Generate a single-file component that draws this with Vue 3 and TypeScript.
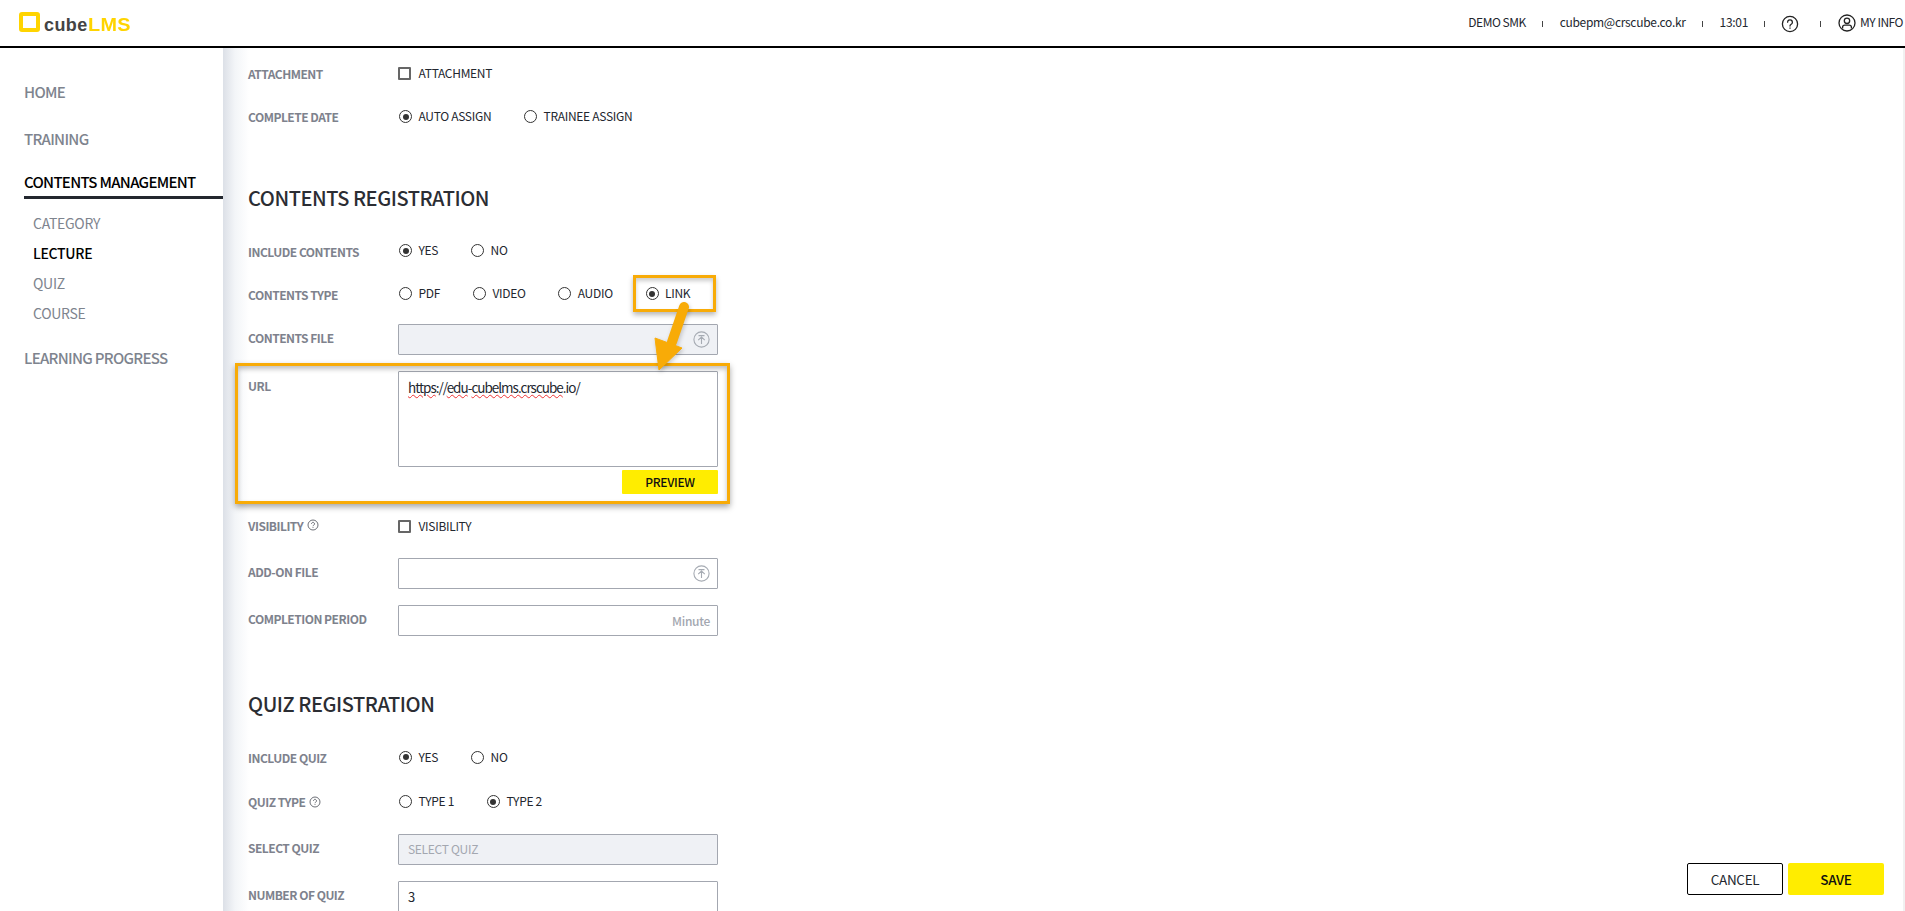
<script setup lang="ts">
const subItems: { label: string; active: boolean }[] = [
  { label: 'CATEGORY', active: false },
  { label: 'LECTURE', active: true },
  { label: 'QUIZ', active: false },
  { label: 'COURSE', active: false },
]
const includeOptions = [{ label: 'YES', on: true }, { label: 'NO', on: false }]
const typeOptions = [
  { label: 'PDF', on: false },
  { label: 'VIDEO', on: false },
  { label: 'AUDIO', on: false },
  { label: 'LINK', on: true },
]
const quizTypes = [{ label: 'TYPE 1', on: false }, { label: 'TYPE 2', on: true }]
const dateOptions = [{ label: 'AUTO ASSIGN', on: true }, { label: 'TRAINEE ASSIGN', on: false }]
</script>

<template>
  <div class="page">
    <header class="topbar">
      <div class="logo">
        <span class="logo-box"></span>
        <span class="logo-cube">cube</span><span class="logo-lms">LMS</span>
      </div>
      <div class="top-right">
        <span class="tight">DEMO SMK</span>
        <i class="sep"></i>
        <span>cubepm@crscube.co.kr</span>
        <i class="sep"></i>
        <span>13:01</span>
        <i class="sep"></i>
        <svg class="help" width="18" height="18" viewBox="0 0 18 18" fill="none" stroke="#222" stroke-width="1.3">
          <circle cx="9" cy="9" r="7.6" />
          <path d="M6.6 7.2a2.4 2.4 0 1 1 3.6 2.1c-.8.5-1.2.9-1.2 1.8" stroke-linecap="round" />
          <path d="M9 12.6v1.2" />
        </svg>
        <i class="sep s4"></i>
        <span class="myinfo tight">
          <svg width="18" height="18" viewBox="0 0 18 18" fill="none" stroke="#222" stroke-width="1.3">
            <circle cx="9" cy="9" r="8" />
            <circle cx="9" cy="6.8" r="2.7" />
            <path d="M4.6 14.6v-1.4c0-1.3 1-2 2.2-2h4.4c1.2 0 2.2.7 2.2 2v1.4" />
          </svg>
          MY INFO
        </span>
      </div>
    </header>

    <div class="body">
      <aside class="sidebar">
        <div class="nav-top">HOME</div>
        <div class="nav-top">TRAINING</div>
        <div class="nav-top active">CONTENTS MANAGEMENT</div>
        <ul class="sub">
          <li v-for="s in subItems" :key="s.label" :class="{ on: s.active }">{{ s.label }}</li>
        </ul>
        <div class="nav-top last">LEARNING PROGRESS</div>
      </aside>

      <main class="content">
        <div class="row radio-row">
          <label class="lbl">ATTACHMENT</label>
          <div class="opts"><span class="check"><i class="box"></i>ATTACHMENT</span></div>
        </div>
        <div class="row radio-row">
          <label class="lbl">COMPLETE DATE</label>
          <div class="opts">
            <span v-for="o in dateOptions" :key="o.label" class="radio"><i class="dot" :class="{ on: o.on }"></i>{{ o.label }}</span>
          </div>
        </div>

        <h2>CONTENTS REGISTRATION</h2>

        <div class="row radio-row raised">
          <label class="lbl">INCLUDE CONTENTS</label>
          <div class="opts">
            <span v-for="o in includeOptions" :key="o.label" class="radio"><i class="dot" :class="{ on: o.on }"></i>{{ o.label }}</span>
          </div>
        </div>
        <div class="row radio-row raised">
          <label class="lbl">CONTENTS TYPE</label>
          <div class="opts">
            <span v-for="o in typeOptions" :key="o.label" class="radio"><i class="dot" :class="{ on: o.on }"></i>{{ o.label }}<b v-if="o.on" class="mark-link"></b></span>
          </div>
        </div>
        <div class="row field-row">
          <label class="lbl">CONTENTS FILE</label>
          <div class="field disabled">
            <svg class="up" width="17" height="17" viewBox="0 0 17 17" fill="none" stroke="#a6abb3" stroke-width="1.1">
              <circle cx="8.5" cy="8.5" r="7.6" /><path d="M5.5 4.6h6M8.5 13V6M5.2 9.2 8.5 6l3.3 3.2" />
            </svg>
          </div>
        </div>
        <div class="row url-row">
          <b class="mark-url"></b>
          <label class="lbl url-lbl">URL</label>
          <div class="url-col">
            <div class="area"><span class="err">https</span>://<span class="err">edu</span>-<span class="err">cubelms.crscube</span>.io/</div>
            <button class="preview"><span>PREVIEW</span></button>
          </div>
        </div>
        <div class="row vis-row field-row raised">
          <label class="lbl">VISIBILITY
            <svg class="tip" width="12" height="12" viewBox="0 0 12 12" fill="none" stroke="#5c6068" stroke-width=".9">
              <circle cx="6" cy="6" r="5" /><path d="M4.5 4.8a1.5 1.5 0 1 1 2.3 1.3c-.5.3-.8.6-.8 1.1M6 8.2v.8" />
            </svg>
          </label>
          <div class="opts"><span class="check"><i class="box"></i>VISIBILITY</span></div>
        </div>
        <div class="row field-row">
          <label class="lbl">ADD-ON FILE</label>
          <div class="field">
            <svg class="up" width="17" height="17" viewBox="0 0 17 17" fill="none" stroke="#a6abb3" stroke-width="1.1">
              <circle cx="8.5" cy="8.5" r="7.6" /><path d="M5.5 4.6h6M8.5 13V6M5.2 9.2 8.5 6l3.3 3.2" />
            </svg>
          </div>
        </div>
        <div class="row field-row">
          <label class="lbl">COMPLETION PERIOD</label>
          <div class="field"><span class="unit">Minute</span></div>
        </div>

        <h2>QUIZ REGISTRATION</h2>

        <div class="row radio-row include-quiz">
          <label class="lbl">INCLUDE QUIZ</label>
          <div class="opts">
            <span v-for="o in includeOptions" :key="o.label" class="radio"><i class="dot" :class="{ on: o.on }"></i>{{ o.label }}</span>
          </div>
        </div>
        <div class="row radio-row quiz-type">
          <label class="lbl">QUIZ TYPE
            <svg class="tip" width="12" height="12" viewBox="0 0 12 12" fill="none" stroke="#5c6068" stroke-width=".9">
              <circle cx="6" cy="6" r="5" /><path d="M4.5 4.8a1.5 1.5 0 1 1 2.3 1.3c-.5.3-.8.6-.8 1.1M6 8.2v.8" />
            </svg>
          </label>
          <div class="opts">
            <span v-for="o in quizTypes" :key="o.label" class="radio"><i class="dot" :class="{ on: o.on }"></i>{{ o.label }}</span>
          </div>
        </div>
        <div class="row field-row">
          <label class="lbl">SELECT QUIZ</label>
          <div class="field disabled"><span class="ph">SELECT QUIZ</span></div>
        </div>
        <div class="row field-row">
          <label class="lbl">NUMBER OF QUIZ</label>
          <div class="field"><span class="val">3</span></div>
        </div>

        <svg class="arrow" width="50" height="80" viewBox="0 0 50 80">
          <path d="M39 7 27 42" stroke="#f8ab07" stroke-width="10" stroke-linecap="round" fill="none" />
          <path d="M10 38 14 70 37 48Z" fill="#f8ab07" stroke="#f8ab07" stroke-width="1" stroke-linejoin="round" />
        </svg>
      </main>

      <div class="actions">
        <button class="cancel">CANCEL</button>
        <button class="save">SAVE</button>
      </div>
    </div>
  </div>
</template>

<style>
html, body { margin: 0; overflow: hidden; background: #fff; }
</style>

<style scoped>
.page {
  width: 1905px;
  height: 911px;
  display: flex;
  flex-direction: column;
  overflow: hidden;
  font-family: "Noto Sans CJK KR", "Noto Sans", sans-serif;
  color: #23272f;
  letter-spacing: -0.3px;
}
.topbar {
  height: 46px;
  flex: none;
  border-bottom: 2px solid #000;
  display: flex;
  align-items: center;
  justify-content: space-between;
  padding: 0 2px 0 19px;
}
.logo { display: flex; align-items: baseline; font-family: "Liberation Sans", Arial, sans-serif; font-weight: 700; font-size: 18px; line-height: 20px; margin-top: 3px; letter-spacing: 0; }
.logo-box { width: 21px; height: 20px; box-sizing: border-box; border: 4.5px solid #ffd400; border-radius: 3px; margin-right: 4px; align-self: center; margin-top: -6px; }
.logo-cube { color: #444; letter-spacing: .4px; }
.logo-lms { color: #ffd400; display: inline-block; transform: scaleX(1.1); transform-origin: left; letter-spacing: .3px; }
.top-right { display: flex; align-items: center; font-size: 12px; height: 46px; color: #23272f; }
.top-right > span { position: relative; top: -2px; }
.tight { letter-spacing: -0.5px; }
.sep { width: 1px; height: 6px; background: #444; display: block; margin: 2px 17px 0 16px; }
.help { margin: 2px 0 0 -1px; }
.s4 { margin-left: 21px; }
.myinfo { display: flex; align-items: center; gap: 4px; }
.myinfo svg { position: relative; top: 2px; }

.body { flex: 1; display: flex; position: relative; min-height: 0; }
.sidebar { width: 223px; flex: none; padding-top: 32px; box-sizing: border-box; }
.nav-top { font-size: 15px; font-weight: 500; color: #7e848e; height: 24px; line-height: 24px; margin: 0 0 23px 24px; letter-spacing: -0.7px; }
.nav-top.active { color: #000; border-bottom: 3px solid #23272f; height: 22px; line-height: 16px; margin-bottom: 0; }
.sub { list-style: none; margin: 10px 0 0 33px; padding: 0; }
.sub li { font-size: 14px; color: #7e848e; height: 29.9px; line-height: 29.9px; }
.sub li.on { color: #000; font-weight: 500; }
.nav-top.last { margin-top: 17px; }

.content {
  flex: 1;
  position: relative;
  padding: 12px 0 0 25px;
  background: linear-gradient(90deg, #dce0e7 0, #f3f5f8 12px, #fff 26px);
  border-right: 2px solid #f1f1f1;
  overflow: hidden;
  min-width: 0;
}
.row { display: flex; align-items: center; margin-bottom: 16px; position: relative; }
.radio-row { height: 27px; }
.lbl { width: 150px; flex: none; font-size: 12px; font-weight: 700; color: #7e828d; display: flex; align-items: center; gap: 4px; letter-spacing: -0.5px; }
.field-row .lbl { margin-top: -4px; }
.opts { display: flex; gap: 31.8px; margin-top: -2px; }
.raised .opts { margin-top: -4px; }
.include-quiz .opts { margin-top: -3px; }
.radio, .check { display: inline-flex; align-items: center; font-size: 12px; color: #23272f; position: relative; white-space: nowrap; }
.dot { width: 11px; height: 11px; border: 1px solid #333; border-radius: 50%; margin: 2px 6.5px 0 1px; position: relative; display: block; }
.dot.on::after { content: ""; position: absolute; inset: 2.5px; background: #333; border-radius: 50%; }
.box { width: 9px; height: 9px; border: 2px solid #666; border-radius: 1px; margin: 2px 7.5px 0 0; display: block; }
h2 { font-size: 20px; font-weight: 500; line-height: 30px; color: #2b2d33; margin: 53px 0 25px; letter-spacing: -0.45px; }
.field { width: 320px; height: 31px; box-sizing: border-box; border: 1px solid #a3a7b0; border-radius: 1px; display: flex; align-items: center; justify-content: flex-end; padding: 0 7px; position: relative; }
.field.disabled { background: #eff1f5; }
.unit { font-size: 12px; font-weight: 500; color: #a3a7b0; }
.ph { font-size: 12px; color: #a3a7b0; margin-right: auto; padding-left: 2px; margin-top: -3px; }
.val { font-size: 13px; color: #23272f; margin-right: auto; padding-left: 2px; }
.url-row { align-items: flex-start; margin-bottom: 18px; }
.url-lbl { padding-top: 6px; }
.url-col { width: 320px; display: flex; flex-direction: column; align-items: flex-end; }
.area { width: 320px; height: 96px; box-sizing: border-box; border: 1px solid #a3a7b0; border-radius: 1px; padding: 4px 9px; font-size: 13.5px; line-height: 22px; color: #23272f; letter-spacing: -1px; }
.err { text-decoration: underline wavy #e33; text-decoration-thickness: 1px; text-underline-offset: 1px; }
.preview { width: 96px; height: 24px; margin-top: 3px; border: 0; background: #ffed00; border-radius: 1px; font: 500 12px "Noto Sans CJK KR", sans-serif; color: #111; padding: 0 0 2px; letter-spacing: -0.3px; }
.vis-row { height: 30px; margin-bottom: 16px; }
.include-quiz { margin-bottom: 17px; }
.quiz-type { margin-bottom: 19px; }
.tip { flex: none; }

.mark-link { position: absolute; left: -12px; top: -9px; width: 83px; height: 37px; box-sizing: border-box; border: 3px solid #f8ab07; box-shadow: 0 3px 5px rgba(0,0,0,.28), inset 0 3px 4px rgba(0,0,0,.2); }
.mark-url { position: absolute; left: -13px; top: -8px; width: 495px; height: 141px; box-sizing: border-box; border: 3px solid #f8ab07; box-shadow: 0 3px 6px rgba(0,0,0,.35), inset 0 3px 5px rgba(0,0,0,.25); pointer-events: none; }
.arrow { position: absolute; left: 422px; top: 252px; filter: drop-shadow(1px 2px 2px rgba(0,0,0,.2)); overflow: visible; }

.actions { position: absolute; right: 21px; bottom: 16px; display: flex; gap: 5px; }
.actions button { width: 96px; height: 32px; box-sizing: border-box; border-radius: 2px; font: 500 13.5px "Noto Sans CJK KR", sans-serif; color: #23272f; padding: 0; letter-spacing: -0.3px; }
.cancel { background: #fff; border: 1px solid #000; font-weight: 400 !important; }
.save { background: #ffed00; border: 0; color: #111 !important; }
</style>
